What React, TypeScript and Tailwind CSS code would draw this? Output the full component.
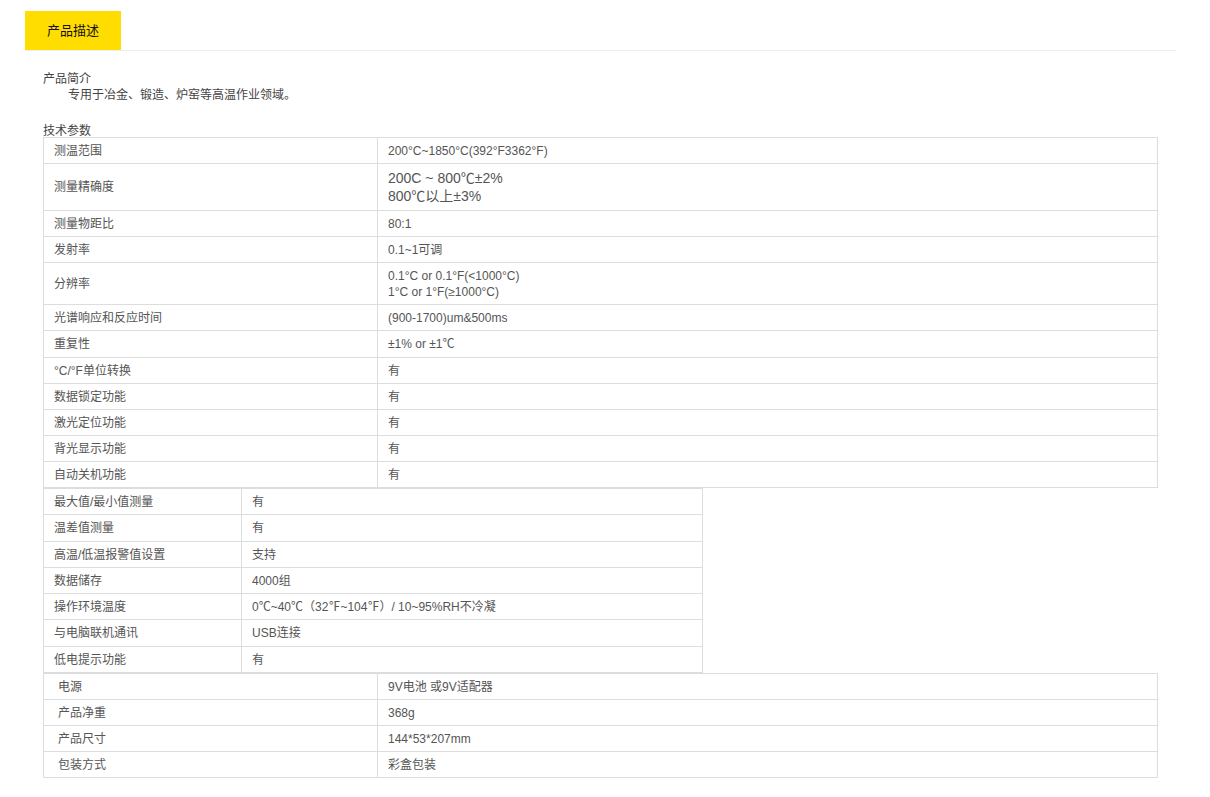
import React from "react";

type Row = { label: string; value: React.ReactNode; h?: string };

const specsA: Row[] = [
  { label: "测温范围", value: "200°C~1850°C(392°F3362°F)" },
  {
    label: "测量精确度",
    value: (
      <span className="text-[14px] leading-[18px]">
        200C ~ 800℃±2%
        <br />
        800℃以上±3%
      </span>
    ),
    h: "h-[47px]",
  },
  { label: "测量物距比", value: "80:1" },
  { label: "发射率", value: "0.1~1可调" },
  {
    label: "分辨率",
    value: (
      <span className="leading-[16px]">
        0.1°C or 0.1°F(&lt;1000°C)
        <br />
        1°C or 1°F(≥1000°C)
      </span>
    ),
    h: "h-[42px]",
  },
  { label: "光谱响应和反应时间", value: "(900-1700)um&500ms" },
  { label: "重复性", value: "±1% or ±1℃", h: "h-[27px]" },
  { label: "°C/°F单位转换", value: "有" },
  { label: "数据锁定功能", value: "有" },
  { label: "激光定位功能", value: "有" },
  { label: "背光显示功能", value: "有" },
  { label: "自动关机功能", value: "有" },
];

const specsB: Row[] = [
  { label: "最大值/最小值测量", value: "有" },
  { label: "温差值测量", value: "有", h: "h-[27px]" },
  { label: "高温/低温报警值设置", value: "支持" },
  { label: "数据储存", value: "4000组" },
  { label: "操作环境温度", value: "0℃~40℃（32℉~104℉）/ 10~95%RH不冷凝" },
  { label: "与电脑联机通讯", value: "USB连接", h: "h-[27px]" },
  { label: "低电提示功能", value: "有" },
];

const specsC: Row[] = [
  { label: "电源", value: "9V电池 或9V适配器" },
  { label: "产品净重", value: "368g" },
  { label: "产品尺寸", value: "144*53*207mm" },
  { label: "包装方式", value: "彩盒包装" },
];

function SpecTable({
  rows,
  width,
  labelWidth,
  labelPad,
}: {
  rows: Row[];
  width: string;
  labelWidth: string;
  labelPad: string;
}) {
  return (
    <table className={`${width} border-collapse table-fixed text-[12px] text-[#555]`}>
      <colgroup>
        <col className={labelWidth} />
        <col />
      </colgroup>
      <tbody>
        {rows.map((r) => (
          <tr key={r.label} className={r.h ?? "h-[26px]"}>
            <td className={`border border-[#ddd] ${labelPad} py-0 align-middle`}>{r.label}</td>
            <td className="border border-[#ddd] pl-[10px] py-0 align-middle">{r.value}</td>
          </tr>
        ))}
      </tbody>
    </table>
  );
}

export default function App() {
  return (
    <div className="bg-white min-h-[797px] font-['Liberation_Sans','Noto_Sans_CJK_SC',sans-serif] pt-[11px] px-[25px]">
      <div className="w-[1151px] flex border-b border-[#eee]">
        <div className="w-[96px] h-[39px] bg-[#ffdd00] flex items-center justify-center text-[13px] text-[#111]">
          产品描述
        </div>
      </div>

      <div className="pl-[18px] pt-[20px] text-[12px] text-[#444] leading-[16px]">
        <p>产品简介</p>
        <p className="pl-[25px]">专用于冶金、锻造、炉窑等高温作业领域。</p>
        <p className="mt-[22px] leading-[12px]">技术参数</p>

        <SpecTable rows={specsA} width="w-[1115px]" labelWidth="w-[334px]" labelPad="pl-[10px]" />
        <SpecTable rows={specsB} width="w-[660px]" labelWidth="w-[198px]" labelPad="pl-[10px]" />
        <SpecTable rows={specsC} width="w-[1115px]" labelWidth="w-[334px]" labelPad="pl-[14px]" />
      </div>
    </div>
  );
}
